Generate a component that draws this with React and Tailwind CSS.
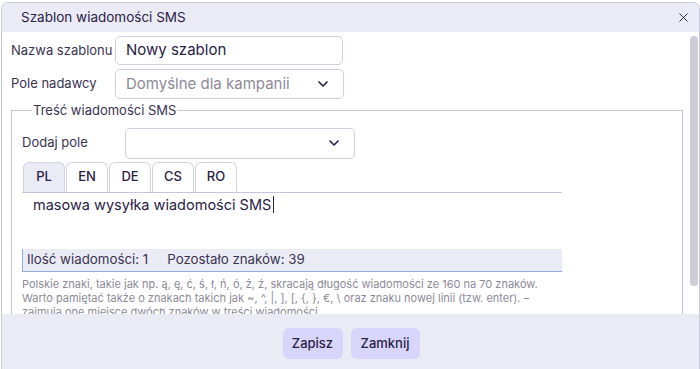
import { ChevronDown, X } from 'lucide-react'

const font = { fontFamily: 'Inter, "Noto Sans", sans-serif' }

const tabs = ['PL', 'EN', 'DE', 'CS', 'RO']

function Select({ value, className }) {
  return (
    <div className={`flex items-center justify-between rounded-[5px] border border-[#cfcde2] bg-white pl-[10px] pr-[12px] ${className}`}>
      <span className="text-[15px] text-[#8d8a98]">{value}</span>
      <ChevronDown className="h-[16px] w-[16px] text-[#2a2145]" strokeWidth={2.5} />
    </div>
  )
}

export default function App() {
  return (
    <div className="h-[369px] w-[700px] overflow-hidden bg-white pt-[2px] pl-[1px]" style={font}>
      <div className="flex h-[367px] w-[699px] flex-col overflow-hidden rounded-t-[7px] border border-b-0 border-[#cac8de]">
        {/* header */}
        <div className="flex h-[29px] shrink-0 items-center justify-between bg-[#ebebf6] pl-[19px] pr-[8px]">
          <span className="text-[13.5px] text-[#2a2145]">Szablon wiadomości SMS</span>
          <X className="h-[15px] w-[15px] text-[#2a2145]" strokeWidth={1.5} />
        </div>

        {/* body */}
        <div className="flex h-[282px] shrink-0 overflow-hidden bg-white">
          <div className="flex-1 pl-[9px] pr-[7px] pt-[4px]">
            <div className="flex items-center">
              <span className="w-[104px] text-[13px] text-[#3a3350]">Nazwa szablonu</span>
              <div className="flex h-[29px] w-[228px] items-center rounded-[5px] border border-[#cfcde2] pl-[10px] text-[15px] text-[#2a2145]">
                Nowy szablon
              </div>
            </div>
            <div className="mt-[4px] flex items-center">
              <span className="w-[104px] text-[13px] text-[#3a3350]">Pole nadawcy</span>
              <Select value="Domyślne dla kampanii" className="h-[30px] w-[229px]" />
            </div>

            <fieldset className="mt-[2px] border border-[#c7c5df] pl-[10px] pr-[10px] pb-[20px]">
              <legend className="ml-[10px] px-[1px] text-[13px] text-[#3a3350]">Treść wiadomości SMS</legend>
              <div className="mt-[7px] flex items-center">
                <span className="w-[103px] text-[13px] text-[#3a3350]">Dodaj pole</span>
                <Select value="" className="h-[31px] w-[230px]" />
              </div>

              <div className="w-[540px]">
                <div className="mt-[3px] flex gap-[1px] border-b border-[#c7c5df] pl-[1px]">
                  {tabs.map((t, i) => (
                    <div
                      key={t}
                      className={`flex h-[30px] w-[42px] items-center justify-center rounded-t-[6px] border border-b-0 border-[#d4d2e6] text-[13px] font-medium text-[#2a2145] ${i === 0 ? 'bg-[#ebebf5]' : 'bg-white'}`}
                    >
                      {t}
                    </div>
                  ))}
                </div>
                <div className="h-[56px] pl-[11px] text-[14.5px] text-[#2a2145]">
                  masowa wysyłka wiadomości SMS<span className="ml-[2px] inline-block h-[17px] w-[1px] translate-y-[3px] bg-[#2a2145]" />
                </div>
                <div className="flex h-[23px] items-center gap-[19px] border-b border-l border-[#93acde] bg-[#ebebf5] pl-[4px] text-[13.3px] text-[#3a3350]">
                  <span>Ilość wiadomości: 1</span>
                  <span>Pozostało znaków: 39</span>
                </div>
              </div>
              <p className="mt-[5px] text-[11px] leading-[14px] text-[#8d8a98]">
                Polskie znaki, takie jak np. ą, ę, ć, ś, ł, ń, ó, ż, ź, skracają długość wiadomości ze 160 na 70 znaków.
                <br />
                Warto pamiętać także o znakach takich jak ~, ^, |, ], [, {'{'}, {'}'}, €, \ oraz znaku nowej linii (tzw. enter). –
                <br />
                zajmują one miejsce dwóch znaków w treści wiadomości.
              </p>
            </fieldset>
          </div>
          <div className="w-[9px] shrink-0 pt-[4px]">
            <div className="h-[250px] w-[8px] rounded-[4px] bg-[#cdccd8]" />
          </div>
        </div>

        {/* footer */}
        <div className="flex flex-1 justify-center gap-[8px] bg-[#ebebf5] pt-[14px] pl-[1px]">
          <button className="h-[31px] w-[60px] rounded-[6px] bg-[#d7d6fa] text-[13px] font-medium text-[#2a2145]">Zapisz</button>
          <button className="h-[31px] w-[69px] rounded-[6px] bg-[#d7d6fa] text-[13px] font-medium text-[#2a2145]">Zamknij</button>
        </div>
      </div>
    </div>
  )
}
